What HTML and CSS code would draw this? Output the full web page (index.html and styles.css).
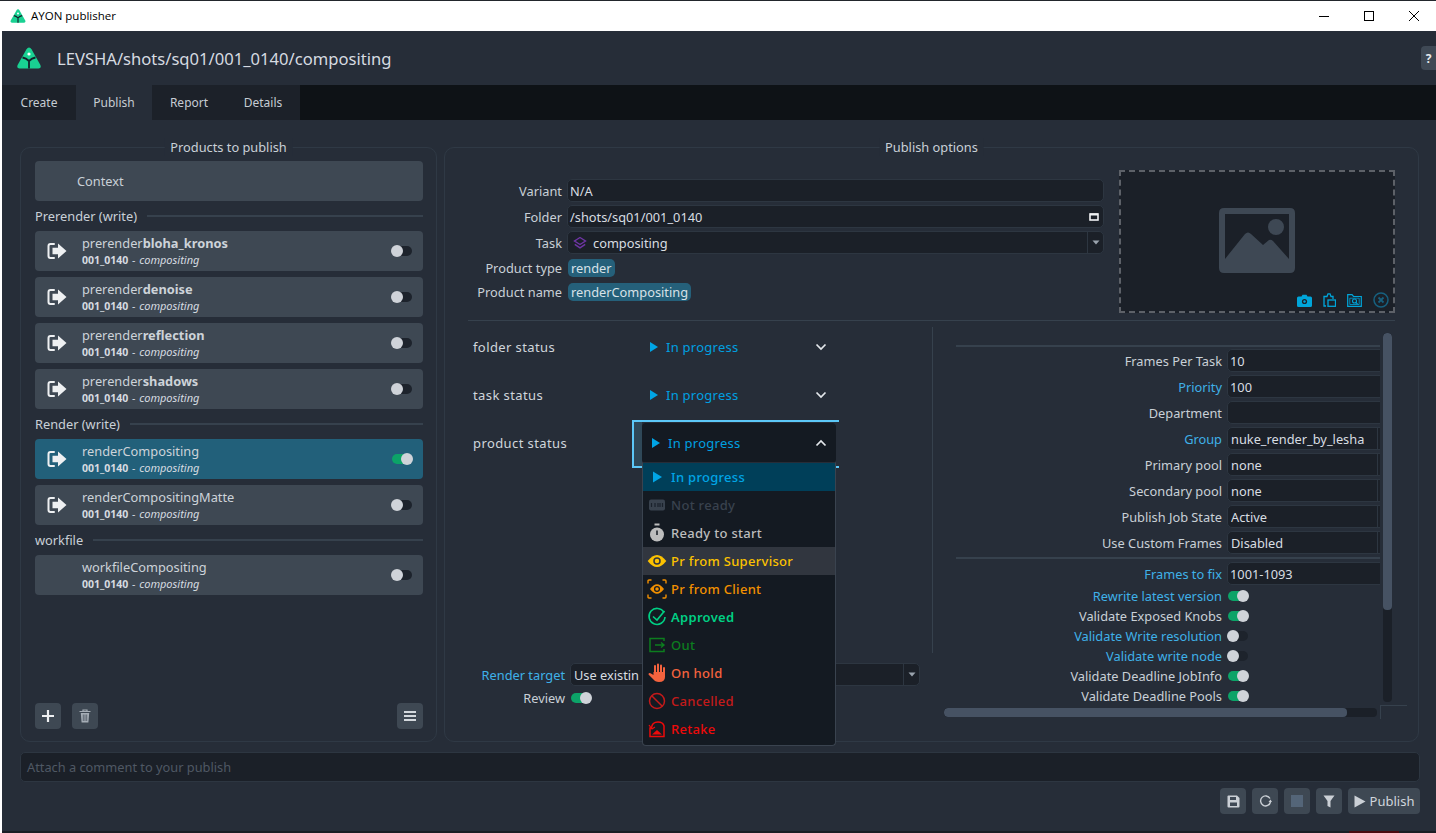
FILE: index.html
```html
<!DOCTYPE html>
<html lang="en">
<head>
    <meta charset="UTF-8">
    <title>AYON publisher</title>
    <link rel="stylesheet" href="styles.css">
</head>
<body>
<svg class="defs" width="0" height="0">
    <symbol id="logo" viewBox="0 0 24 22">
        <path d="M12 0.5 Q13.5 0.5 14.5 2.2 L23.4 18 Q24.6 21.5 21.5 21.5 L2.5 21.5 Q-0.6 21.5 0.6 18 L9.5 2.2 Q10.5 0.5 12 0.5 Z" fill="#19d192"/>
        <circle cx="12" cy="7" r="1.6" fill="#fff"/>
        <path d="M12 14 V21.5 M5.5 10.5 Q9 11 12 14 Q15 11 18.5 10.5" stroke="#14202a" stroke-width="1.8" fill="none"/>
    </symbol>
    <symbol id="exit" viewBox="0 0 20 18">
        <path d="M7 2 H3.5 Q1.5 2 1.5 4 V14 Q1.5 16 3.5 16 H7" stroke="#eef0f2" stroke-width="2" fill="none" stroke-linecap="round"/>
        <path d="M11 1.5 L19.5 9 L11 16.5 V12.2 H5.5 V5.8 H11 Z" fill="#eef0f2"/>
    </symbol>
    <symbol id="play" viewBox="0 0 10 12">
        <path d="M1 1 L9 6 L1 11 Z" fill="#00a5e6"/>
    </symbol>
    <symbol id="chevron" viewBox="0 0 12 8">
        <path d="M1.5 1.5 L6 6 L10.5 1.5" stroke="#e4e8ec" stroke-width="1.7" fill="none"/>
    </symbol>
    <symbol id="toggle-arrow" viewBox="0 0 8 5">
        <path d="M0.5 0.5 H7.5 L4 4.5 Z" fill="#9aa3ad"/>
    </symbol>
</svg>

<div class="titlebar">
    <svg class="titlebar-logo"><use href="#logo"/></svg>
    <span class="titlebar-text">AYON publisher</span>
    <div class="window-buttons">
        <svg width="12" height="12" viewBox="0 0 12 12"><path d="M1 6.5 H11" stroke="#000"/></svg>
        <svg width="12" height="12" viewBox="0 0 12 12"><rect x="1.5" y="1.5" width="9" height="9" fill="none" stroke="#000"/></svg>
        <svg width="12" height="12" viewBox="0 0 12 12"><path d="M1 1 L11 11 M11 1 L1 11" stroke="#000"/></svg>
    </div>
</div>

<div class="app">
    <div class="header">
        <svg class="header-logo"><use href="#logo"/></svg>
        <span class="context-path">LEVSHA/shots/sq01/001_0140/compositing</span>
        <span class="help">?</span>
    </div>

    <div class="tabs">
        <span class="tab">Create</span>
        <span class="tab active">Publish</span>
        <span class="tab">Report</span>
        <span class="tab">Details</span>
    </div>

    <div class="content">
        <div class="panels">
            <div class="panel products">
                <span class="panel-title">Products to publish</span>
                <div class="card context">Context</div>

                <div class="group-label">Prerender (write)</div>
                <div class="card-list">
                    <div class="card">
                        <svg class="card-icon"><use href="#exit"/></svg>
                        <div class="card-text">
                            <div class="card-name">prerender<b>bloha_kronos</b></div>
                            <div class="card-sub"><b>001_0140</b> - <i>compositing</i></div>
                        </div>
                        <span class="toggle"></span>
                    </div>
                    <div class="card">
                        <svg class="card-icon"><use href="#exit"/></svg>
                        <div class="card-text">
                            <div class="card-name">prerender<b>denoise</b></div>
                            <div class="card-sub"><b>001_0140</b> - <i>compositing</i></div>
                        </div>
                        <span class="toggle"></span>
                    </div>
                    <div class="card">
                        <svg class="card-icon"><use href="#exit"/></svg>
                        <div class="card-text">
                            <div class="card-name">prerender<b>reflection</b></div>
                            <div class="card-sub"><b>001_0140</b> - <i>compositing</i></div>
                        </div>
                        <span class="toggle"></span>
                    </div>
                    <div class="card">
                        <svg class="card-icon"><use href="#exit"/></svg>
                        <div class="card-text">
                            <div class="card-name">prerender<b>shadows</b></div>
                            <div class="card-sub"><b>001_0140</b> - <i>compositing</i></div>
                        </div>
                        <span class="toggle"></span>
                    </div>
                </div>

                <div class="group-label">Render (write)</div>
                <div class="card-list">
                    <div class="card selected">
                        <svg class="card-icon"><use href="#exit"/></svg>
                        <div class="card-text">
                            <div class="card-name">renderCompositing</div>
                            <div class="card-sub"><b>001_0140</b> - <i>compositing</i></div>
                        </div>
                        <span class="toggle on"></span>
                    </div>
                    <div class="card">
                        <svg class="card-icon"><use href="#exit"/></svg>
                        <div class="card-text">
                            <div class="card-name">renderCompositingMatte</div>
                            <div class="card-sub"><b>001_0140</b> - <i>compositing</i></div>
                        </div>
                        <span class="toggle"></span>
                    </div>
                </div>

                <div class="group-label">workfile</div>
                <div class="card-list">
                    <div class="card">
                        <span class="card-icon"></span>
                        <div class="card-text">
                            <div class="card-name">workfileCompositing</div>
                            <div class="card-sub"><b>001_0140</b> - <i>compositing</i></div>
                        </div>
                        <span class="toggle"></span>
                    </div>
                </div>

                <div class="products-buttons">
                    <button class="icon-btn">
                        <svg width="14" height="14" viewBox="0 0 14 14"><path d="M7 1 V13 M1 7 H13" stroke="#eef0f2" stroke-width="2.2"/></svg>
                    </button>
                    <button class="icon-btn">
                        <svg width="12" height="14" viewBox="0 0 12 14"><path d="M0.5 2.5 H11.5 M4 2.5 V1 H8 V2.5" stroke="#a5adb6" stroke-width="1.2" fill="none"/><path d="M1.8 4 H10.2 L9.4 13.5 H2.6 Z" fill="#a5adb6"/><path d="M4.3 5.5 V12 M6 5.5 V12 M7.7 5.5 V12" stroke="#3f4955" stroke-width="0.7"/></svg>
                    </button>
                    <button class="icon-btn push-right">
                        <svg width="14" height="12" viewBox="0 0 14 12"><path d="M1 2 H13 M1 6 H13 M1 10 H13" stroke="#d3d8dd" stroke-width="2"/></svg>
                    </button>
                </div>
            </div>

            <div class="panel options">
                <span class="panel-title">Publish options</span>

                <div class="options-top">
                    <div class="attr-form">
                        <label class="attr-label">Variant</label>
                        <div class="field">N/A</div>
                        <label class="attr-label">Folder</label>
                        <div class="field folder-field">
                            <span>/shots/sq01/001_0140</span>
                            <svg width="10" height="8" viewBox="0 0 10 8"><rect x="1" y="1" width="8" height="6" fill="none" stroke="#f0f2f4" stroke-width="1.6"/><path d="M1 1.5 H9" stroke="#f0f2f4" stroke-width="2"/></svg>
                        </div>
                        <label class="attr-label">Task</label>
                        <div class="field combo-field">
                            <svg class="task-icon" width="14" height="14" viewBox="0 0 14 14"><path d="M7 1.5 L12.5 5 L7 8.5 L1.5 5 Z" fill="none" stroke="#6f35a5" stroke-width="1.4"/><path d="M1.8 8.3 L7 11.8 L12.2 8.3" fill="none" stroke="#6f35a5" stroke-width="1.4"/></svg>
                            <span class="combo-value">compositing</span>
                            <span class="combo-arrow"><svg width="8" height="5"><use href="#toggle-arrow"/></svg></span>
                        </div>
                        <label class="attr-label">Product type</label>
                        <div class="pill-row"><span class="pill">render</span></div>
                        <label class="attr-label">Product name</label>
                        <div class="pill-row"><span class="pill">renderCompositing</span></div>
                    </div>

                    <div class="thumbnail">
                        <svg class="thumb-placeholder" width="76" height="65" viewBox="0 0 76 65">
                            <path fill-rule="evenodd" fill="#3e4854" d="M5 0 H71 Q76 0 76 5 V60 Q76 65 71 65 H5 Q0 65 0 60 V5 Q0 0 5 0 Z M6 6 V51 L26 26 Q29 23 32 26 L44 37 L50 32 Q52 31 54 33 L70 51 V6 Z"/>
                            <circle cx="57" cy="19" r="8" fill="#3e4854"/>
                        </svg>
                        <div class="thumb-actions">
                            <svg width="15" height="13" viewBox="0 0 15 13"><path d="M1.5 2.5 H4.5 L5.5 0.8 H9.5 L10.5 2.5 H13.5 Q15 2.5 15 4 V11.5 Q15 13 13.5 13 H1.5 Q0 13 0 11.5 V4 Q0 2.5 1.5 2.5 Z" fill="#00a5da"/><circle cx="7.5" cy="7.5" r="2.6" fill="#1c2128"/><circle cx="7.5" cy="7.5" r="1.2" fill="#00a5da"/></svg>
                            <svg width="13" height="14" viewBox="0 0 13 14"><path d="M3 13 H1 V3.5 H4 L5 0.8 H7 L8 3.5 H10 V6" fill="none" stroke="#00a5da" stroke-width="1.3"/><rect x="5" y="7" width="7.5" height="6.3" fill="none" stroke="#00a5da" stroke-width="1.3"/></svg>
                            <svg width="15" height="13" viewBox="0 0 15 13"><path d="M0.7 12.3 V0.7 H5 L6.5 2.5 H14.3 V12.3 Z" fill="none" stroke="#00a5da" stroke-width="1.2"/><path d="M2.8 4.2 H12.2 V10.5 H2.8 Z" fill="none" stroke="#00a5da" stroke-width="0.8"/><circle cx="7.5" cy="7" r="2" fill="none" stroke="#00a5da" stroke-width="1.1"/><path d="M9 8.5 L10.5 10" stroke="#00a5da" stroke-width="1.1"/></svg>
                            <svg width="16" height="16" viewBox="0 0 16 16"><circle cx="8" cy="8" r="7" fill="none" stroke="#17607f" stroke-width="1.5"/><path d="M5.5 5.5 L10.5 10.5 M10.5 5.5 L5.5 10.5" stroke="#17607f" stroke-width="1.8"/></svg>
                        </div>
                    </div>
                </div>

                <div class="options-sep"></div>

                <div class="options-bottom">
                    <div class="options-left">
                        <div class="status-block">
                            <div class="status-row">
                                <span class="status-label">folder status</span>
                                <div class="status-combo">
                                    <svg width="10" height="12"><use href="#play"/></svg>
                                    <span class="status-text">In progress</span>
                                    <svg class="chevron" width="12" height="8"><use href="#chevron"/></svg>
                                </div>
                            </div>
                            <div class="status-row">
                                <span class="status-label">task status</span>
                                <div class="status-combo">
                                    <svg width="10" height="12"><use href="#play"/></svg>
                                    <span class="status-text">In progress</span>
                                    <svg class="chevron" width="12" height="8"><use href="#chevron"/></svg>
                                </div>
                            </div>
                            <div class="status-row">
                                <span class="status-label">product status</span>
                                <div class="status-combo open">
                                    <svg width="10" height="12"><use href="#play"/></svg>
                                    <span class="status-text">In progress</span>
                                    <svg class="chevron flip" width="12" height="8"><use href="#chevron"/></svg>

                                    <ul class="status-menu">
                                        <li class="status-item current c-progress">
                                            <svg width="20" height="20" viewBox="0 0 20 20"><path d="M6 4.5 L15 10 L6 15.5 Z" fill="#00a5e6"/></svg>
                                            In progress
                                        </li>
                                        <li class="status-item c-notready">
                                            <svg width="20" height="20" viewBox="0 0 20 20"><rect x="2" y="4.5" width="16" height="11" rx="2" fill="#39424e"/><path d="M4.5 8 V12 M8 8 V12 M11 8 V12 M13 8 V12 M15.5 8 V12" stroke="#1a212b" stroke-width="1.2"/></svg>
                                            Not ready
                                        </li>
                                        <li class="status-item c-ready">
                                            <svg width="20" height="20" viewBox="0 0 20 20"><path d="M7.5 1.5 H12.5" stroke="#bdbdbd" stroke-width="2"/><circle cx="10" cy="11.5" r="7" fill="#bdbdbd"/><path d="M10 7.5 V12" stroke="#141a22" stroke-width="1.5"/></svg>
                                            Ready to start
                                        </li>
                                        <li class="status-item hover c-supervisor">
                                            <svg width="20" height="20" viewBox="0 0 20 20"><path d="M0.7 10 Q10 -2 19.3 10 Q10 22 0.7 10 Z" fill="#fcc200"/><circle cx="10" cy="10" r="3" fill="none" stroke="#31363f" stroke-width="1.5"/></svg>
                                            Pr from Supervisor
                                        </li>
                                        <li class="status-item c-client">
                                            <svg width="20" height="20" viewBox="0 0 20 20"><path d="M1 4.5 V2 Q1 1 2 1 H4.5 M15.5 1 H18 Q19 1 19 2 V4.5 M19 15.5 V18 Q19 19 18 19 H15.5 M4.5 19 H2 Q1 19 1 18 V15.5" fill="none" stroke="#f29000" stroke-width="1.4"/><path d="M3 10 Q10 0.5 17 10 Q10 19.5 3 10 Z" fill="#f29000"/><circle cx="10" cy="10" r="2.4" fill="none" stroke="#141a22" stroke-width="1.3"/></svg>
                                            Pr from Client
                                        </li>
                                        <li class="status-item c-approved">
                                            <svg width="20" height="20" viewBox="0 0 20 20"><path d="M17 5.5 A8 8 0 1 0 18 10" fill="none" stroke="#00d084" stroke-width="1.6"/><path d="M6 9.5 L10 13 L17.5 4" fill="none" stroke="#00d084" stroke-width="1.6"/></svg>
                                            Approved
                                        </li>
                                        <li class="status-item c-out">
                                            <svg width="20" height="20" viewBox="0 0 20 20"><path d="M17 6 V3.5 H3 V16.5 H17 V14" fill="none" stroke="#0c7d1f" stroke-width="1.5"/><path d="M8 10 H17 M14 7.5 L17 10 L14 12.5" fill="none" stroke="#0c7d1f" stroke-width="1.4"/></svg>
                                            Out
                                        </li>
                                        <li class="status-item c-hold">
                                            <svg width="20" height="20" viewBox="0 0 20 20"><path d="M8 10 V3 M11 10 V1.5 M14 10 V2.5 M17 11 V5" stroke="#f4633e" stroke-width="2" stroke-linecap="round"/><path d="M6.5 9 H18 V14 Q18 19 12 19 Q8 19 6 16 L1.5 11.5 Q1.5 9.5 3.5 10.2 L6.5 12 Z" fill="#f4633e"/></svg>
                                            On hold
                                        </li>
                                        <li class="status-item c-cancelled">
                                            <svg width="20" height="20" viewBox="0 0 20 20"><circle cx="10" cy="10" r="7.5" fill="none" stroke="#c41a1a" stroke-width="1.5"/><path d="M4.7 4.7 L15.3 15.3" stroke="#c41a1a" stroke-width="1.5"/></svg>
                                            Cancelled
                                        </li>
                                        <li class="status-item c-retake">
                                            <svg width="20" height="20" viewBox="0 0 20 20"><path d="M3 9 H4.5 Q5 3 11 3 Q16 3 17 7 V17.5 H3 Z" fill="none" stroke="#ed0a0a" stroke-width="1.5"/><path d="M2 6 L5 10 L8 8" fill="none" stroke="#ed0a0a" stroke-width="1.2"/><path d="M5 15.5 L10 11 L15 15.5 Z" fill="#ed0a0a"/></svg>
                                            Retake
                                        </li>
                                    </ul>
                                </div>
                            </div>
                        </div>

                        <div class="render-form">
                            <label class="attr-label accent">Render target</label>
                            <div class="field combo-field">
                                <span class="combo-value">Use existin</span>
                                <span class="combo-arrow"><svg width="8" height="5"><use href="#toggle-arrow"/></svg></span>
                            </div>
                            <label class="attr-label">Review</label>
                            <div class="toggle-cell"><span class="toggle on"></span></div>
                        </div>
                    </div>

                    <div class="options-right">
                        <div class="attr-viewport">
                            <div class="attr-sep first"></div>
                            <div class="deadline-form">
                                <label class="attr-label">Frames Per Task</label>
                                <div class="field">10</div>
                                <label class="attr-label accent">Priority</label>
                                <div class="field">100</div>
                                <label class="attr-label">Department</label>
                                <div class="field"></div>
                                <label class="attr-label accent">Group</label>
                                <div class="field combo-field small-arrow"><span class="combo-value">nuke_render_by_lesha</span><span class="combo-arrow"></span></div>
                                <label class="attr-label">Primary pool</label>
                                <div class="field combo-field small-arrow"><span class="combo-value">none</span><span class="combo-arrow"></span></div>
                                <label class="attr-label">Secondary pool</label>
                                <div class="field combo-field small-arrow"><span class="combo-value">none</span><span class="combo-arrow"></span></div>
                                <label class="attr-label">Publish Job State</label>
                                <div class="field combo-field small-arrow"><span class="combo-value">Active</span><span class="combo-arrow"></span></div>
                                <label class="attr-label">Use Custom Frames</label>
                                <div class="field combo-field small-arrow"><span class="combo-value">Disabled</span><span class="combo-arrow"></span></div>
                            </div>
                            <div class="attr-sep"></div>
                            <div class="deadline-form">
                                <label class="attr-label accent">Frames to fix</label>
                                <div class="field">1001-1093</div>
                            </div>
                            <div class="validators">
                                <label class="attr-label accent">Rewrite latest version</label>
                                <div class="toggle-cell"><span class="toggle on"></span></div>
                                <label class="attr-label">Validate Exposed Knobs</label>
                                <div class="toggle-cell"><span class="toggle on"></span></div>
                                <label class="attr-label accent">Validate Write resolution</label>
                                <div class="toggle-cell"><span class="toggle"></span></div>
                                <label class="attr-label accent">Validate write node</label>
                                <div class="toggle-cell"><span class="toggle"></span></div>
                                <label class="attr-label">Validate Deadline JobInfo</label>
                                <div class="toggle-cell"><span class="toggle on"></span></div>
                                <label class="attr-label">Validate Deadline Pools</label>
                                <div class="toggle-cell"><span class="toggle on"></span></div>
                            </div>
                        </div>
                        <div class="vscroll"><div class="vscroll-thumb"></div></div>
                        <div class="hscroll"><div class="hscroll-thumb"></div></div>
                        <div class="scroll-corner"></div>
                    </div>
                </div>
            </div>
        </div>

        <div class="comment">Attach a comment to your publish</div>

        <div class="footer">
            <button class="icon-btn">
                <svg width="13" height="13" viewBox="0 0 13 13"><path d="M0.5 1.5 Q0.5 0.5 1.5 0.5 H10 L12.5 3 V11.5 Q12.5 12.5 11.5 12.5 H1.5 Q0.5 12.5 0.5 11.5 Z" fill="#cbd0d6"/><rect x="3" y="2" width="6" height="3" fill="#3f4955"/><rect x="3" y="7.5" width="7" height="3.5" fill="#3f4955"/></svg>
            </button>
            <button class="icon-btn">
                <svg width="13" height="13" viewBox="0 0 13 13"><path d="M11 3.5 A5 5 0 1 0 11.5 7" fill="none" stroke="#cbd0d6" stroke-width="1.4"/><path d="M9.5 7 H13 L11.5 4.5 Z" fill="#cbd0d6"/></svg>
            </button>
            <button class="icon-btn">
                <span class="stop-square"></span>
            </button>
            <button class="icon-btn">
                <svg width="12" height="13" viewBox="0 0 12 13"><path d="M0.5 0.5 H11.5 L7.5 6 V12.5 L4.5 11 V6 Z" fill="#cbd0d6"/></svg>
            </button>
            <button class="icon-btn publish-btn">
                <svg width="12" height="13" viewBox="0 0 12 13"><path d="M0.5 0.5 L11.5 6.5 L0.5 12.5 Z" fill="#cbd0d6"/></svg>
                Publish
            </button>
        </div>
    </div>
    <div class="bottom-edge"><span class="edge-red"></span></div>
</div>
</body>
</html>
```

FILE: styles.css
```css
* {
    box-sizing: border-box;
}

html, body {
    margin: 0;
    height: 100%;
    overflow: hidden;
}

body {
    font-family: "Noto Sans", sans-serif;
    font-size: 12.8px;
    color: #d0d6dc;
    background: #fff;
    display: flex;
    flex-direction: column;
    width: 1436px;
    height: 833px;
}

.defs {
    position: absolute;
}

/* window chrome */
.titlebar {
    height: 31px;
    flex: none;
    background: #fff;
    border-top: 1px solid #22262c;
    display: flex;
    align-items: center;
    padding-left: 10px;
    color: #000;
}

.titlebar-logo {
    width: 16px;
    height: 14px;
}

.titlebar-text {
    margin-left: 5px;
    margin-bottom: 2px;
    font-family: "Open Sans", sans-serif;
    font-size: 11.5px;
}

.window-buttons {
    margin-left: auto;
    margin-right: 16px;
    display: flex;
    gap: 33px;
}

.app {
    flex: 1;
    margin-left: 2px;
    background: #262d38;
    display: flex;
    flex-direction: column;
    min-height: 0;
}

.header {
    height: 54px;
    flex: none;
    display: flex;
    align-items: center;
    padding-left: 15px;
}

.header-logo {
    width: 24px;
    height: 22px;
}

.context-path {
    margin-left: 16px;
    font-size: 16.6px;
    color: #d6dbe1;
}

.help {
    margin-left: auto;
    width: 15px;
    height: 24px;
    border-radius: 4px 0 0 4px;
    background: #3f4955;
    font-weight: 700;
    font-size: 12px;
    color: #e6e9ec;
    display: flex;
    align-items: center;
    justify-content: center;
}

.tabs {
    height: 35px;
    flex: none;
    background: #0e1216;
    display: flex;
}

.tab {
    width: 74px;
    background: #1c2129;
    display: flex;
    align-items: center;
    justify-content: center;
    font-size: 12px;
    color: #c6ccd3;
}

.tab.active {
    width: 76px;
    background: #262d38;
}

.content {
    flex: 1;
    padding: 27px 16px 0 18px;
    display: flex;
    flex-direction: column;
    min-height: 0;
}

.panels {
    height: 595px;
    flex: none;
    display: flex;
    gap: 7px;
}

.panel {
    position: relative;
    flex: none;
    border: 1px solid #2f3945;
    border-radius: 10px;
}

.panel-title {
    position: absolute;
    top: -10px;
    left: 50%;
    transform: translateX(-50%);
    padding: 0 6px;
    background: #262d38;
    white-space: nowrap;
    color: #c9d0d7;
}

/* left panel */
.products {
    width: 417px;
    padding: 13px 13px 12px 14px;
    display: flex;
    flex-direction: column;
}

.card {
    height: 40px;
    flex: none;
    border-radius: 4px;
    background: #3e4853;
    display: flex;
    align-items: center;
    padding-right: 11px;
}

.card.context {
    padding-left: 42px;
    color: #c9d0d7;
}

.card.selected {
    background: #22607a;
}

.card-list {
    display: flex;
    flex-direction: column;
    gap: 6px;
}

.card-icon {
    width: 20px;
    height: 18px;
    margin-left: 12px;
    flex: none;
}

.card-text {
    margin-left: 15px;
    margin-top: -2px;
    flex: 1;
    min-width: 0;
}

.card-name {
    line-height: 18px;
    color: #cdd3d9;
}

.card-name b {
    font-weight: 700;
}

.card-sub {
    font-size: 10.5px;
    line-height: 14px;
    margin-top: 1px;
    color: #d6dbe0;
    word-spacing: 1px;
}

.card-sub i {
    font-size: 11px;
}

.group-label {
    height: 30px;
    display: flex;
    align-items: center;
    gap: 10px;
    color: #c9d0d7;
}

.group-label::after {
    content: "";
    flex: 1;
    height: 2px;
    background: #36414d;
}

/* knob hangs off the track, so both are drawn as pseudo elements */
.toggle {
    position: relative;
    display: block;
    width: 21px;
    height: 12px;
    flex: none;
}

.toggle::before {
    content: "";
    position: absolute;
    left: 4px;
    right: 0;
    top: 1px;
    bottom: 1px;
    border-radius: 5px;
    background: #1d232c;
}

.toggle::after {
    content: "";
    position: absolute;
    left: 0;
    top: 0;
    width: 12px;
    height: 12px;
    border-radius: 50%;
    background: #cfd3d9;
}

.toggle.on::before {
    left: 1px;
    right: 1px;
    background: #0ca368;
}

.toggle.on::after {
    left: auto;
    right: -1px;
}

.products-buttons {
    margin-top: auto;
    display: flex;
    gap: 11px;
}

.push-right {
    margin-left: auto;
}

.icon-btn {
    width: 26px;
    height: 26px;
    padding: 0;
    border: none;
    border-radius: 4px;
    background: #3e4853;
    color: #cbd0d6;
    font-family: inherit;
    font-size: 13px;
    display: flex;
    align-items: center;
    justify-content: center;
}

/* right panel */
.options {
    width: 975px;
    padding: 22px 23px 0 23px;
}

.options-top {
    display: flex;
    justify-content: space-between;
    align-items: flex-start;
}

.attr-form {
    width: 636px;
    padding-top: 9px;
    display: grid;
    grid-template-columns: 94px 1fr;
    column-gap: 5px;
    row-gap: 3px;
    align-items: center;
}

.attr-label {
    text-align: right;
    white-space: nowrap;
    color: #c9d0d7;
}

.attr-label.accent {
    color: #3fb1e8;
}

.field {
    height: 23px;
    border: 1px solid #2d3641;
    border-radius: 5px;
    background: #1b2028;
    color: #d8dde2;
    display: flex;
    align-items: center;
    padding-left: 2px;
    white-space: nowrap;
    overflow: hidden;
}

.folder-field {
    justify-content: space-between;
    padding-right: 4px;
}

.combo-field {
    padding-left: 3px;
}

.combo-value {
    flex: 1;
    overflow: hidden;
}

.task-icon {
    margin: 0 6px 0 2px;
    flex: none;
}

.combo-arrow {
    width: 16px;
    height: 100%;
    flex: none;
    border-left: 1px solid #2d3641;
    display: flex;
    align-items: center;
    justify-content: center;
}

.pill-row {
    height: 21px;
    display: flex;
    align-items: center;
    padding-left: 1px;
}

.pill {
    height: 18px;
    padding: 0 3px;
    border-radius: 5px;
    background: #25607a;
    color: #d8e2e8;
    display: flex;
    align-items: center;
}

.thumbnail {
    position: relative;
    width: 276px;
    height: 143px;
    border: 2px dashed #5d6168;
    background: #1b2028;
    display: flex;
    align-items: center;
    justify-content: center;
}

.thumb-placeholder {
    margin-top: -2px;
}

.thumb-actions {
    position: absolute;
    right: 4px;
    bottom: 3px;
    display: flex;
    align-items: center;
    gap: 11px;
}

.options-sep {
    margin-top: 7px;
    height: 1px;
    background: #36414d;
}

.options-bottom {
    margin-top: 6px;
    display: flex;
    gap: 11px;
}

.options-left {
    width: 465px;
    flex: none;
}

.status-block {
    height: 326px;
    border-right: 1px solid #36414d;
    display: flex;
    flex-direction: column;
    gap: 8px;
}

.status-row {
    isolation: isolate;
    height: 40px;
    display: flex;
    align-items: center;
    padding-left: 5px;
}

.status-label {
    width: 167px;
    font-size: 13px;
    letter-spacing: 0.4px;
    color: #d0d6dc;
}

.status-combo {
    position: relative;
    width: 196px;
    height: 40px;
    display: flex;
    align-items: center;
    padding: 0 9px;
}

.status-text {
    margin-left: 7px;
    font-size: 13px;
    color: #00a0e0;
    flex: 1;
    letter-spacing: 0.25px;
}

.chevron.flip {
    transform: rotate(180deg);
}

.status-combo.open {
    margin-left: 2px;
    width: 194px;
    background: #141a22;
    border-radius: 4px;
}

.status-combo.open::before {
    content: "";
    position: absolute;
    z-index: -1;
    top: -3px;
    bottom: -5px;
    left: -10px;
    right: -3px;
    border: solid #5cc8f8;
    border-width: 2px 0 2px 2px;
    background: linear-gradient(to right, #2f4858 8px, #262d38 8px);
}

.status-menu {
    position: absolute;
    z-index: 2;
    top: 100%;
    left: 0;
    width: 194px;
    margin: -1px 0 0;
    padding: 0 0 2px;
    list-style: none;
    background: #141a22;
    border: 1px solid #3a434f;
    border-top: 1px solid #262d38;
    border-radius: 0 0 4px 4px;
}

.status-item {
    height: 28px;
    display: flex;
    align-items: center;
    gap: 4px;
    padding-left: 4px;
    font-size: 13px;
    font-weight: 500;
    letter-spacing: 0.3px;
}

.status-item.current {
    background: #003f59;
}

.status-item.hover {
    background: #31363f;
}

.c-progress { color: #00a5e6; }
.c-notready { color: #39424e; }
.c-ready { color: #bdbdbd; }
.c-supervisor { color: #fcc200; }
.c-client { color: #f29000; }
.c-approved { color: #00d084; font-weight: 600; }
.c-out { color: #0c7d1f; }
.c-hold { color: #f4633e; }
.c-cancelled { color: #c41a1a; }
.c-retake { color: #ed0a0a; }

.render-form {
    width: 452px;
    margin-top: 10px;
    display: grid;
    grid-template-columns: 97px 1fr;
    column-gap: 5px;
    row-gap: 2px;
    align-items: center;
}

.toggle-cell {
    height: 20px;
    display: flex;
    align-items: center;
}

.options-right {
    margin-top: 6px;
    display: grid;
    grid-template-columns: 436px 9px 12px;
    grid-template-rows: 372px 9px;
    column-gap: 3px;
    row-gap: 3px;
}

.attr-viewport {
    grid-column: 1;
    grid-row: 1;
    overflow: hidden;
    padding-top: 12px;
}

.attr-sep {
    margin: 3px 0 3px 12px;
    height: 2px;
    background: #36414d;
}

.attr-sep.first {
    margin-top: 0;
    margin-bottom: 2px;
}

.deadline-form {
    width: 444px;
    display: grid;
    grid-template-columns: 278px 1fr;
    column-gap: 5px;
    row-gap: 3px;
    align-items: center;
}

.deadline-form .field {
    width: 160px;
}

.small-arrow .combo-arrow {
    width: 9px;
}

.validators {
    margin-top: 1px;
    display: grid;
    grid-template-columns: 278px 1fr;
    column-gap: 5px;
    align-items: center;
}

.vscroll {
    grid-column: 2;
    grid-row: 1;
    width: 9px;
    height: 369px;
    border-radius: 4px;
    background: #1b2028;
    overflow: hidden;
}

.vscroll-thumb {
    height: 277px;
    border-radius: 4px;
    background: #465263;
}

.hscroll {
    grid-column: 1;
    grid-row: 2;
    width: 433px;
    height: 9px;
    border-radius: 4px;
    background: #1b2028;
    overflow: hidden;
}

.hscroll-thumb {
    width: 403px;
    height: 9px;
    border-radius: 4px;
    background: #465263;
}

.scroll-corner {
    grid-column: 2 / 4;
    grid-row: 2;
    height: 14px;
    margin: -3px 0 0 -3px;
    border-top: 1px solid #36414d;
    border-left: 1px solid #36414d;
}

/* bottom */
.comment {
    margin-top: 10px;
    height: 30px;
    flex: none;
    border: 1px solid #2d3641;
    border-radius: 5px;
    background: #1b2028;
    color: #4f5864;
    display: flex;
    align-items: center;
    padding-left: 6px;
}

.footer {
    margin-top: 6px;
    display: flex;
    justify-content: flex-end;
    gap: 6px;
}

.stop-square {
    width: 12px;
    height: 12px;
    background: #546578;
}

.publish-btn {
    width: 72px;
    gap: 4px;
    color: #d0d6dc;
}

.bottom-edge {
    margin-top: auto;
    height: 2px;
    flex: none;
    background: #1a1e24;
    position: relative;
}

.edge-red {
    position: absolute;
    left: 1347px;
    top: 0;
    width: 50px;
    height: 2px;
    background: #4a0a10;
}
```
